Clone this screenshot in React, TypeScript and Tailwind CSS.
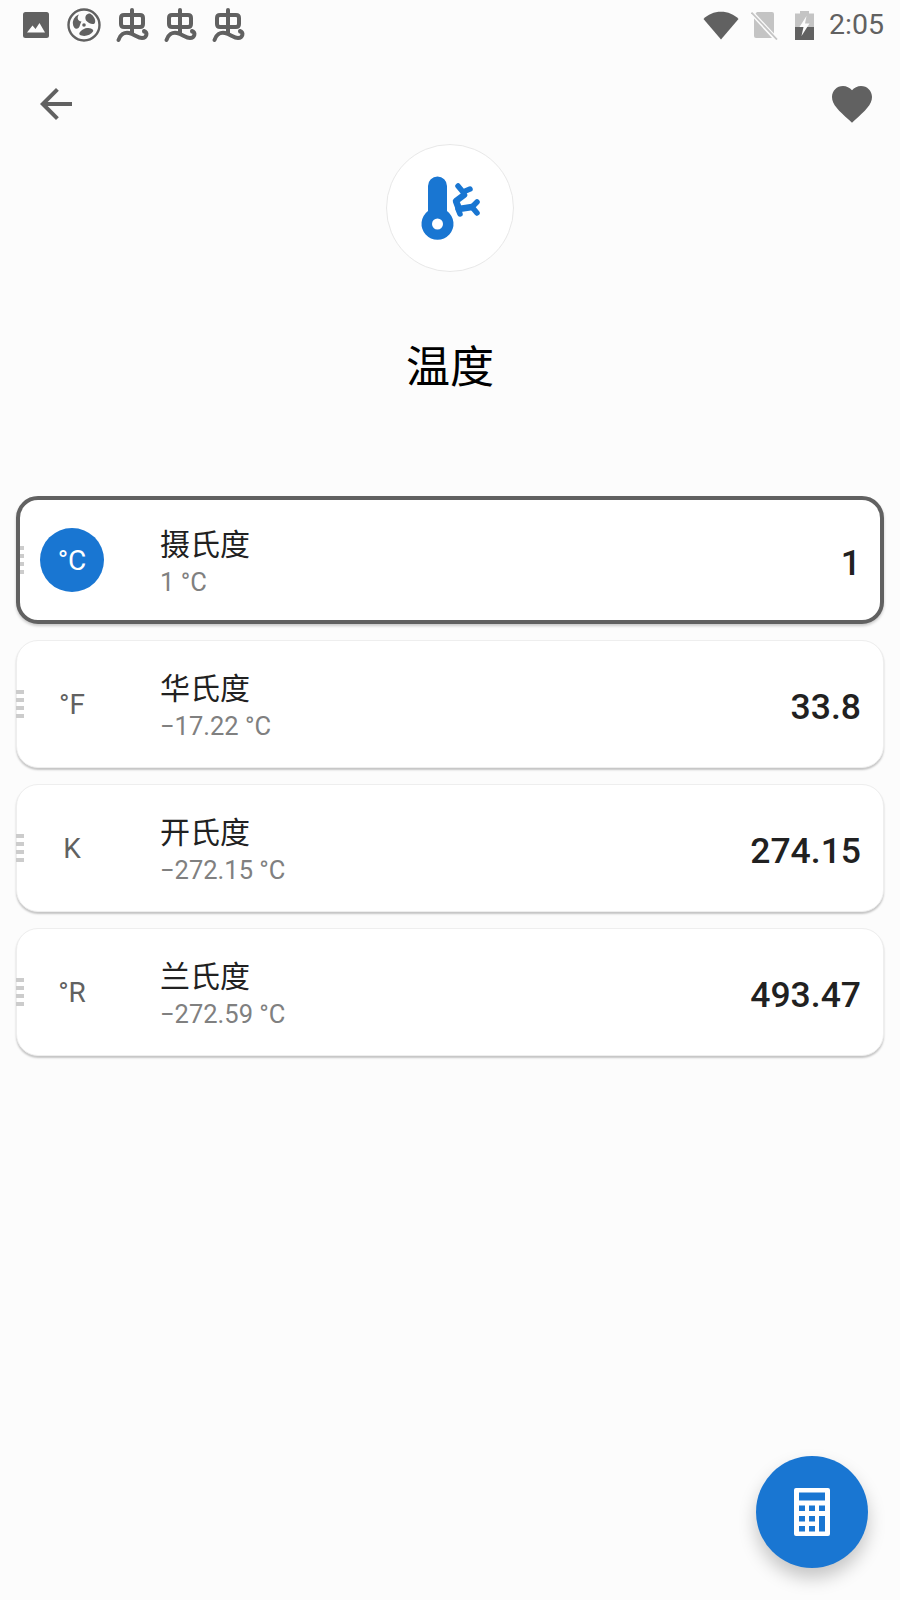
const cjk = "font-['Roboto','Noto_Sans_CJK_SC',sans-serif]";

function BugIcon() {
  return (
    <svg width="34" height="36" viewBox="0 0 34 36" fill="none" stroke="#616161" strokeWidth="4" strokeLinecap="round" strokeLinejoin="round">
      <path d="M16 3V26" />
      <path d="M16 20H8Q5 20 5 17V11Q5 8 8 8H24Q27 8 27 11V17Q27 20 24 20H16" />
      <path d="M2.5 33C4 28 8 25 13 26C18 27 22 31 26 31C31 31 32 25 28 24" />
      <circle cx="28" cy="25" r="1.6" fill="#616161" stroke="none" />
    </svg>
  );
}

function Card({ unit, name, sub, value, active }: { unit: string; name: string; sub: string; value: string; active?: boolean }) {
  return (
    <div className={active
      ? "relative h-32 flex items-center bg-white rounded-[22px] border-4 border-[#616161] pl-5 pr-[19px] shadow-[0_2px_3px_rgba(0,0,0,0.2)]"
      : "relative h-32 flex items-center bg-white rounded-[22px] border border-[#eeeeee] pl-[23px] pr-[22px] shadow-[0_2px_2px_rgba(0,0,0,0.22)]"}>
      <div className={active ? "absolute left-0 top-[46px] flex flex-col gap-1" : "absolute -left-px top-[49px] flex flex-col gap-1"}>
        <div className={active ? "w-1 h-1 bg-[#cccccc]" : "w-2 h-1 bg-[#cccccc]"} />
        <div className={active ? "w-1 h-1 bg-[#cccccc]" : "w-2 h-1 bg-[#cccccc]"} />
        <div className={active ? "w-1 h-1 bg-[#cccccc]" : "w-2 h-1 bg-[#cccccc]"} />
        <div className={active ? "w-1 h-1 bg-[#cccccc]" : "w-2 h-1 bg-[#cccccc]"} />
      </div>
      <div className={active
        ? "w-16 h-16 pt-[2px] rounded-full bg-[#1976d2] text-white flex items-center justify-center text-[28px] leading-none"
        : "w-16 h-16 pt-[2px] rounded-full text-[#616161] flex items-center justify-center text-[28px] leading-none"}>
        {unit}
      </div>
      <div className="ml-14 mt-1 flex flex-col flex-1">
        <div className="text-[30px] leading-[40px] text-[#212121]">{name}</div>
        <div className="text-[25.5px] leading-[34px] text-[#808080]">{sub}</div>
      </div>
      <div className="mt-2 text-[35.5px] leading-none font-medium text-[#212121]">{value}</div>
    </div>
  );
}

export default function App() {
  return (
    <div className={`relative w-[900px] h-[1600px] bg-[#fcfcfc] overflow-hidden ${cjk}`}>
      {/* status bar */}
      <div className="h-[50px] flex items-center justify-between pl-[23px] pr-4">
        <div className="flex items-center">
          <svg width="26" height="26" viewBox="0 0 26 26">
            <rect width="26" height="26" rx="2.5" fill="#616161" />
            <path d="M4 20.5L9.5 13.5L12.5 17L16.5 11L22 20.5Z" fill="#fcfcfc" />
          </svg>
          <svg width="34" height="34" viewBox="0 0 34 34" className="ml-[18px]" fill="#616161">
            <circle cx="17" cy="17" r="15.5" fill="none" stroke="#616161" strokeWidth="2.4" />
            <path d="M14.5 13.5C10 13 10 9 12 6.5C8.5 7.5 6 11 5.8 15C6 20 9 22 11.5 20C13 18.5 13 15.5 14.5 13.5Z" />
            <path d="M19 12.5C17 8 20 5.5 23 5.5C27 7.5 29.5 13 27.5 15.5C25.5 17 21 15 19 12.5Z" />
            <path d="M20 20C24 20 27 21.5 26 23.5C23.5 27.5 16.5 29.5 12.5 26.5C11 24.5 16 20.5 20 20Z" />
            <circle cx="17" cy="17" r="1.8" />
          </svg>
          <div className="ml-[15px] flex gap-[14px]">
            <BugIcon />
            <BugIcon />
            <BugIcon />
          </div>
        </div>
        <div className="flex items-center">
          <svg width="36" height="29" viewBox="0 0 36 29"><path d="M0.5 8C5 3.5 11 0.8 18 0.8C25 0.8 31 3.5 35.5 8L18 28.5Z" fill="#616161" /></svg>
          <svg width="28" height="29" viewBox="0 0 28 29" className="ml-3">
            <path d="M6 1H21Q23 1 23 3V25Q23 27 21 27H5Q3 27 3 25V4Z" fill="#c4c4c4" />
            <path d="M0 1L26 29" stroke="#fcfcfc" strokeWidth="4.5" />
            <path d="M0.5 1.5L26 28.5" stroke="#c4c4c4" strokeWidth="1.8" />
          </svg>
          <svg width="19" height="29" viewBox="0 0 19 29" className="ml-4">
            <path d="M5 0H14V2.5H19V29H0V2.5H5Z" fill="#c4c4c4" />
            <path d="M0 16H19V29H0Z" fill="#616161" />
            <path d="M11.5 5L4.5 16H8.5L6.5 25L14.5 12.5H10Z" fill="#fcfcfc" />
          </svg>
          <span className="ml-[15px] text-[28.5px] leading-none text-[#616161]">2:05</span>
        </div>
      </div>
      {/* top actions */}
      <div className="h-[60px] mt-[24px] flex items-center justify-between px-[24px]">
        <svg width="48" height="48" viewBox="0 0 24 24" fill="#616161" className="ml-2">
          <path d="M20 11H7.83l5.59-5.59L12 4l-8 8 8 8 1.41-1.41L7.83 13H20v-2z" />
        </svg>
        <svg width="48" height="48" viewBox="0 0 24 24" fill="#616161">
          <path d="M12 21.35l-1.45-1.32C5.4 15.36 2 12.28 2 8.5 2 5.42 4.42 3 7.5 3c1.74 0 3.41.81 4.5 2.09C13.09 3.81 14.76 3 16.5 3 19.58 3 22 5.42 22 8.5c0 3.78-3.4 6.86-8.55 11.54L12 21.35z" />
        </svg>
      </div>
      {/* logo */}
      <div className="flex justify-center mt-[10px]">
        <div className="w-32 h-32 rounded-full bg-white border border-[#e8e8e8] flex items-center justify-center">
          <svg width="128" height="128" viewBox="386 144 128 128" className="shrink-0">
            <path d="M428 211V186a9.5 9.5 0 0 1 19 0V211A16 16 0 1 1 428 211Z" fill="#1976d2" />
            <circle cx="437.5" cy="224" r="5.5" fill="white" />
            <g fill="none" stroke="#1976d2" strokeWidth="6.5" strokeLinecap="round" strokeLinejoin="round">
              <path d="M464 195L456 201L459 209L472 207" />
              <path d="M458 186L463 192L470 189" strokeWidth="5.5" />
              <path d="M477 202L472 207L477 213" strokeWidth="5.5" />
              <path d="M458 209L460 214" strokeWidth="5.5" />
            </g>
          </svg>
        </div>
      </div>
      {/* title */}
      <div className="mt-[66px] text-center text-[44px] leading-[60px] text-black">温度</div>
      {/* cards */}
      <div className="mt-[98px] px-4 flex flex-col gap-4">
        <Card active unit="°C" name="摄氏度" sub="1 °C" value="1" />
        <Card unit="°F" name="华氏度" sub="−17.22 °C" value="33.8" />
        <Card unit="K" name="开氏度" sub="−272.15 °C" value="274.15" />
        <Card unit="°R" name="兰氏度" sub="−272.59 °C" value="493.47" />
      </div>
      {/* fab */}
      <div className="absolute left-[756px] top-[1456px] w-28 h-28 rounded-full bg-[#1976d2] flex items-center justify-center shadow-[0_10px_18px_rgba(0,0,0,0.22)]">
        <svg width="36" height="48" viewBox="0 0 36 48">
          <path fillRule="evenodd" fill="white" d="M2 0H34a2 2 0 0 1 2 2V46a2 2 0 0 1-2 2H2a2 2 0 0 1-2-2V2a2 2 0 0 1 2-2ZM5 4.5V12.5H31V4.5ZM5 17.5V23H11V17.5ZM15 17.5V23H21V17.5ZM25 17.5V23H31V17.5ZM5 28V33.5H11V28ZM15 28V33.5H21V28ZM25 28V43.5H31V28ZM5 38V43.5H11V38ZM15 38V43.5H21V38Z" />
        </svg>
      </div>
    </div>
  );
}
